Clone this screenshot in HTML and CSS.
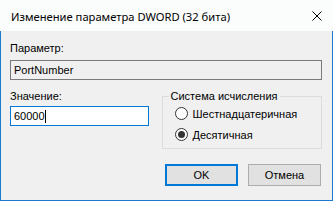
FILE: index.html
```html
<!DOCTYPE html>
<html lang="ru">
  <head>
    <meta charset="UTF-8" />
    <title>Изменение параметра DWORD (32 бита)</title>
    <link rel="stylesheet" href="styles.css">
  </head>
  <body>
    <div class="window">
      <div class="titlebar">
        <span class="title">Изменение параметра DWORD (32 бита)</span>
        <svg class="close" width="10" height="10" viewBox="0 0 10 10">
          <path d="M0.5 0.5 L9.5 9.5 M9.5 0.5 L0.5 9.5" stroke="#000" stroke-width="1" fill="none" />
        </svg>
      </div>

      <div class="content">
        <div class="label">Параметр:</div>
        <div class="field readonly">PortNumber</div>

        <div class="row">
          <div class="value-col">
            <div class="label">Значение:</div>
            <div class="field active">60000<span class="caret"></span></div>
          </div>

          <!-- Radix group -->
          <fieldset class="radix">
            <legend>Система исчисления</legend>
            <label class="radio"><span class="dot"></span>Шестнадцатеричная</label>
            <label class="radio checked"><span class="dot"></span>Десятичная</label>
          </fieldset>
        </div>

        <div class="buttons">
          <button class="btn default">OK</button>
          <button class="btn">Отмена</button>
        </div>
      </div>
    </div>
  </body>
</html>
```

FILE: styles.css
```css
* {
  margin: 0;
  padding: 0;
  box-sizing: border-box;
}

body {
  width: 333px;
  height: 201px;
  font-family: "Liberation Sans", Arial, sans-serif;
  font-size: 11px;
  color: #000;
  background: #f0f0f0;
}

.window {
  width: 333px;
  height: 201px;
  border: 1px solid #1c7bd0;
  border-top: none;
  background: #f0f0f0;
}

.titlebar {
  height: 31px;
  margin: 0 -1px;
  padding: 0 11px 0 11px;
  background: #fbfdfc;
  display: flex;
  align-items: center;
  justify-content: space-between;
}

.title {
  font-family: "Noto Sans", "Open Sans", sans-serif;
  font-size: 11.2px;
  padding-top: 2px;
}

.close {
  display: block;
}

.content {
  padding: 11px 10px 0 9px;
}

.label {
  height: 13px;
  line-height: 13px;
}

.field {
  height: 20px;
  margin-top: 5px;
  padding-left: 3px;
  line-height: 18px;
  border: 1px solid #7a7a7a;
  background: #f0f0f0;
  display: flex;
  align-items: center;
}

.field.active {
  margin-top: 3px;
  border-color: #0078d7;
  background: #fff;
}

.caret {
  width: 1px;
  height: 13px;
  background: #000;
}

.row {
  display: flex;
  gap: 13px;
  margin-top: 10px;
}

.value-col {
  width: 139px;
}

/* Radix group box */
.radix {
  width: 161px;
  height: 59px;
  border: 1px solid #dcdcdc;
  padding: 0 0 0 6px;
}

.radix legend {
  padding: 0 2px;
  height: 13px;
  line-height: 13px;
}

.radio {
  display: flex;
  align-items: center;
  height: 21px;
  gap: 5px;
  padding-left: 6px;
}

.radio .dot {
  width: 13px;
  height: 13px;
  border: 1px solid #333;
  border-radius: 50%;
  background: #fff;
  display: flex;
  align-items: center;
  justify-content: center;
}

.radio.checked .dot::after {
  content: "";
  width: 7px;
  height: 7px;
  border-radius: 50%;
  background: #333;
}

.buttons {
  display: flex;
  justify-content: flex-end;
  gap: 10px;
  margin-top: 15px;
  padding-right: 1px;
}

.btn {
  width: 73px;
  height: 22px;
  font-family: "Liberation Sans", Arial, sans-serif;
  font-size: 11px;
  color: #000;
  background: #e1e1e1;
  border: 1px solid #adadad;
}

.btn.default {
  border: 2px solid #0078d7;
}
```
